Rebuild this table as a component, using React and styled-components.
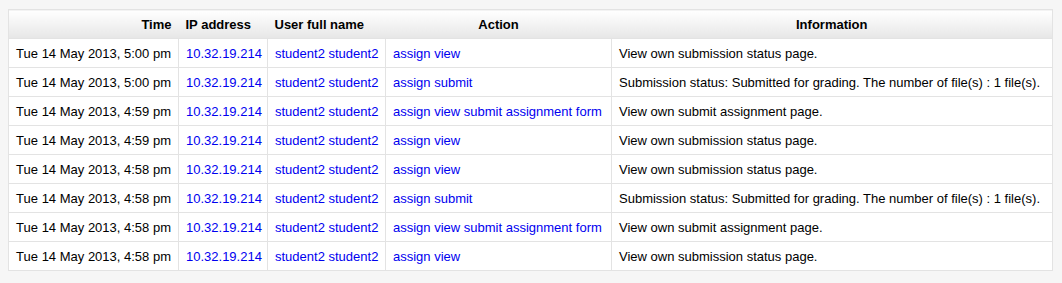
import styled, { createGlobalStyle } from "styled-components";

const GlobalStyle = createGlobalStyle`
    body {
        margin: 0;
        background: #f6f6f6;
        font-family: "Liberation Sans", Arial, sans-serif;
        font-size: 13px;
        color: #000;
    }
`;

const Page = styled.div`
    padding: 9px 10px 0 8px;
`;

const LogTable = styled.table`
    width: 1045px;
    table-layout: fixed;
    border-collapse: collapse;
    background: #fff;
    border: 1px solid #e3e3e3;
`;

const HeadCell = styled.th`
    height: 28px;
    padding: 0 7px;
    font-weight: bold;
    text-align: ${(p) => p.align || "left"};
    background: linear-gradient(to bottom, #ffffff 0%, #f4f4f4 45%, #e6e6e6 100%);
    border-bottom: 1px solid #e3e3e3;
    white-space: nowrap;
`;

const Cell = styled.td`
    height: 28px;
    padding: 0 7px;
    border: 1px solid #e3e3e3;
    text-align: ${(p) => p.align || "left"};
    white-space: nowrap;
`;

const LogLink = styled.a`
    color: #0000f0;
    text-decoration: none;
`;

const columns = [
    { title: "Time", width: 170, align: "right" },
    { title: "IP address", width: 89 },
    { title: "User full name", width: 118 },
    { title: "Action", width: 226, align: "center" },
    { title: "Information", width: 441, align: "center" },
];

const VIEW_STATUS = "View own submission status page.";
const SUBMITTED =
    "Submission status: Submitted for grading. The number of file(s) : 1 file(s).";
const VIEW_FORM = "View own submit assignment page.";

const rows = [
    ["Tue 14 May 2013, 5:00 pm", "assign view", VIEW_STATUS],
    ["Tue 14 May 2013, 5:00 pm", "assign submit", SUBMITTED],
    ["Tue 14 May 2013, 4:59 pm", "assign view submit assignment form", VIEW_FORM],
    ["Tue 14 May 2013, 4:59 pm", "assign view", VIEW_STATUS],
    ["Tue 14 May 2013, 4:58 pm", "assign view", VIEW_STATUS],
    ["Tue 14 May 2013, 4:58 pm", "assign submit", SUBMITTED],
    ["Tue 14 May 2013, 4:58 pm", "assign view submit assignment form", VIEW_FORM],
    ["Tue 14 May 2013, 4:58 pm", "assign view", VIEW_STATUS],
];

function App() {
    return (
        <Page>
            <GlobalStyle />
            <LogTable>
                <colgroup>
                    {columns.map((c) => (
                        <col key={c.title} style={{ width: c.width }} />
                    ))}
                </colgroup>
                <thead>
                    <tr>
                        {columns.map((c) => (
                            <HeadCell key={c.title} align={c.align}>
                                {c.title}
                            </HeadCell>
                        ))}
                    </tr>
                </thead>
                <tbody>
                    {rows.map(([time, action, info], i) => (
                        <tr key={i}>
                            <Cell align="right">{time}</Cell>
                            <Cell>
                                <LogLink href="#">10.32.19.214</LogLink>
                            </Cell>
                            <Cell>
                                <LogLink href="#">student2 student2</LogLink>
                            </Cell>
                            <Cell>
                                <LogLink href="#">{action}</LogLink>
                            </Cell>
                            <Cell>{info}</Cell>
                        </tr>
                    ))}
                </tbody>
            </LogTable>
        </Page>
    );
}

export default App;
